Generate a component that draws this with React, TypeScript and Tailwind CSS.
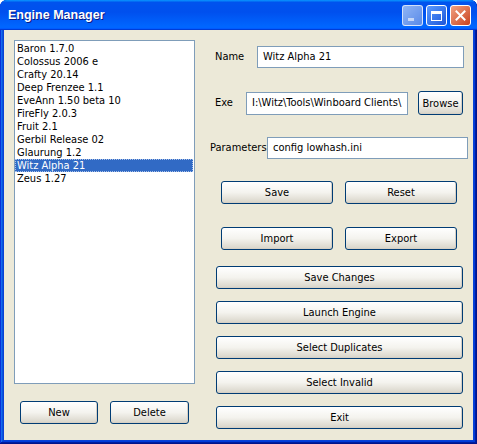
const engines = [
  'Baron 1.7.0',
  'Colossus 2006 e',
  'Crafty 20.14',
  'Deep Frenzee 1.1',
  'EveAnn 1.50 beta 10',
  'FireFly 2.0.3',
  'Fruit 2.1',
  'Gerbil Release 02',
  'Glaurung 1.2',
  'Witz Alpha 21',
  'Zeus 1.27',
]

const font = "font-['DejaVu_Sans_Condensed','DejaVu_Sans',sans-serif] text-[11px] font-normal text-black"

function XpButton({ label, className }: { label: string; className: string }) {
  return (
    <button
      className={`${className} ${font} rounded-[3px] border border-[#003c74] bg-linear-to-b from-white via-[#f4f3ee] to-[#d8d4c8] shadow-[inset_-1px_-1px_#d6d0c5] flex items-center justify-center leading-none`}
    >
      {label}
    </button>
  )
}

function TextBox({ value, className }: { value: string; className: string }) {
  return (
    <div
      className={`${className} border border-[#7f9db9] bg-white pl-[5px] flex items-center overflow-hidden whitespace-nowrap`}
    >
      {value}
    </div>
  )
}

export default function App() {
  return (
    <div className={`w-[477px] h-[444px] flex flex-col bg-white ${font}`}>
      <div className="flex flex-col flex-1 rounded-t-[7px] overflow-hidden bg-[#0842d6] shadow-[inset_-1px_-1px_#00138c,inset_1px_1px_#0831d9,inset_-2px_-2px_#001ea0,inset_2px_2px_#166aee,inset_-3px_-3px_#003bda,inset_3px_3px_#0855dd]">
        {/* title bar */}
        <div className="h-[30px] shrink-0 flex items-center pl-[8px] pr-[6px] bg-[linear-gradient(180deg,#0997ff,#0053ee_8%,#0050ee_40%,#0066ff_88%,#0066ff_93%,#005bff_95%,#003dd7_96%,#003dd7)]">
          <span className="font-['Liberation_Sans',sans-serif] font-bold text-[12.5px] text-white [text-shadow:1px_1px_#0a1883]">
            Engine Manager
          </span>
          <div className="ml-auto flex gap-[3px] items-center pt-[1px]">
            <div className="w-[21px] h-[21px] rounded-[3px] border border-white/70 bg-linear-to-br from-[#8fb4f5] to-[#5a8ae8] relative">
              <div className="absolute left-[5px] bottom-[4px] w-[6px] h-[3px] bg-white/60" />
            </div>
            <div className="w-[21px] h-[21px] rounded-[3px] border border-white bg-linear-to-br from-[#5b9bff] to-[#1f55d8] flex items-center justify-center">
              <div className="w-[11px] h-[10px] border border-white border-t-[3px]" />
            </div>
            <div className="w-[21px] h-[21px] rounded-[3px] border border-white bg-linear-to-br from-[#f0a080] to-[#c8401a] flex items-center justify-center">
              <svg width="11" height="11" viewBox="0 0 11 11">
                <path d="M1.5 1.5 L9.5 9.5 M9.5 1.5 L1.5 9.5" stroke="white" strokeWidth="2" strokeLinecap="square" />
              </svg>
            </div>
          </div>
        </div>

        {/* client area */}
        <div className="flex-1 mx-[4px] mb-[4px] bg-[#ece9d8] flex pt-[10px] pl-[10px]">
          {/* left column */}
          <div className="w-[181px] flex flex-col">
            <div className="h-[344px] border border-[#7f9db9] bg-white pt-[1px] pr-[1px]">
              {engines.map((e) => (
                <div
                  key={e}
                  className={
                    e === 'Witz Alpha 21'
                      ? 'h-[13px] leading-[13px] px-[2px] bg-[#316ac5] text-white outline-1 outline-dotted outline-[#a8c0e8] -outline-offset-1'
                      : 'h-[13px] leading-[13px] px-[2px]'
                  }
                >
                  {e}
                </div>
              ))}
            </div>
            <div className="flex gap-[12px] pl-[6px] mt-[17px]">
              <XpButton label="New" className="w-[78px] h-[23px]" />
              <XpButton label="Delete" className="w-[79px] h-[23px]" />
            </div>
          </div>

          {/* right column */}
          <div className="ml-[15px] w-[258px] flex flex-col">
            <div className="flex items-center mt-[6px] h-[22px]">
              <span className="w-[47px] pl-[5px]">Name</span>
              <TextBox value="Witz Alpha 21" className="w-[207px] h-[22px]" />
            </div>
            <div className="flex items-center mt-[23px] h-[24px]">
              <span className="w-[36px] pl-[5px]">Exe</span>
              <TextBox value="I:\Witz\Tools\Winboard Clients\" className="w-[162px] h-[23px]" />
              <XpButton label="Browse" className="ml-[10px] w-[45px] h-[24px]" />
            </div>
            <div className="flex items-center mt-[22px] h-[22px]">
              <span className="w-[57px]">Parameters</span>
              <TextBox value="config lowhash.ini" className="w-[201px] h-[22px]" />
            </div>
            <div className="flex gap-[12px] pl-[11px] mt-[22px]">
              <XpButton label="Save" className="w-[112px] h-[23px]" />
              <XpButton label="Reset" className="w-[112px] h-[23px]" />
            </div>
            <div className="flex gap-[12px] pl-[11px] mt-[23px]">
              <XpButton label="Import" className="w-[112px] h-[23px]" />
              <XpButton label="Export" className="w-[112px] h-[23px]" />
            </div>
            <div className="flex flex-col gap-[12px] pl-[6px] mt-[16px]">
              <XpButton label="Save Changes" className="w-[247px] h-[23px]" />
              <XpButton label="Launch Engine" className="w-[247px] h-[23px]" />
              <XpButton label="Select Duplicates" className="w-[247px] h-[23px]" />
              <XpButton label="Select Invalid" className="w-[247px] h-[23px]" />
              <XpButton label="Exit" className="w-[247px] h-[23px]" />
            </div>
          </div>
        </div>
      </div>
    </div>
  )
}
